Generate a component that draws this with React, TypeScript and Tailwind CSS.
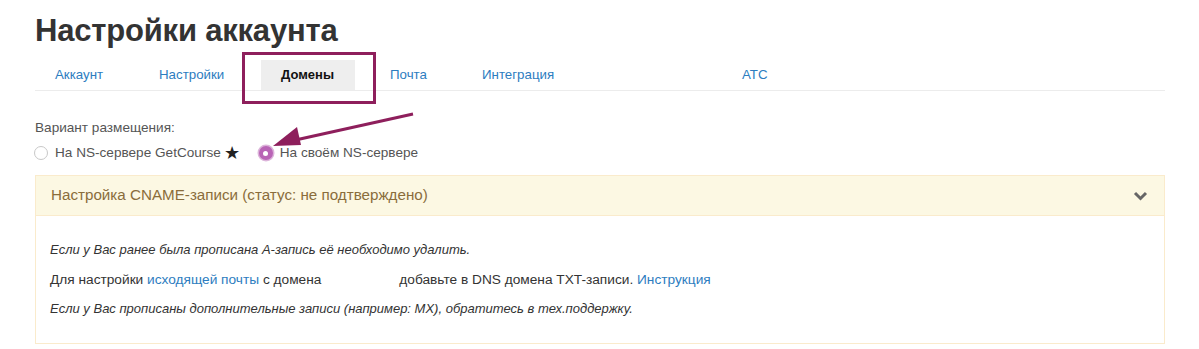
import React from "react";

const tabs = [
  { label: "Аккаунт", w: "w-[104px]" },
  { label: "Настройки", w: "w-[122px]" },
  { label: "Домены", w: "w-[109px]", active: true },
  { label: "Почта", w: "w-[92px]" },
  { label: "Интеграция", w: "w-[260px]" },
  { label: "АТС", w: "w-[110px]" },
];

const Radio = ({ checked, children }: { checked?: boolean; children: React.ReactNode }) => (
  <label className="flex items-center gap-[7px]">
    {checked ? (
      <span className="flex h-[14px] w-[14px] items-center justify-center rounded-full bg-[#b964b6] ring-[1.5px] ring-[#dcb4da]">
        <span className="h-[5px] w-[5px] rounded-full bg-white" />
      </span>
    ) : (
      <span className="h-[14px] w-[14px] rounded-full border border-[#c8c8c8] bg-white" />
    )}
    <span className="flex items-center">{children}</span>
  </label>
);

export default function App() {
  return (
    <div className="relative min-h-[349px] w-[1199px] bg-white pl-[35px] pr-[34px] text-[#333] [font-family:'Liberation_Sans',Arial,sans-serif]">
      <h1 className="pt-[12px] text-[31px] font-bold leading-[38px] tracking-[-0.2px] text-[#333]">
        Настройки аккаунта
      </h1>

      {/* вкладки */}
      <ul className="mt-[10px] flex border-b border-[#ececec]">
        {tabs.map((t) => (
          <li key={t.label} className={t.w}>
            {t.active ? (
              <span className="inline-block h-[30px] w-[94px] bg-[#eeeeee] pl-[20px] text-[13px] font-bold leading-[30px] text-[#111]">
                {t.label}
              </span>
            ) : (
              <a className="inline-block h-[30px] pl-[20px] text-[13.3px] leading-[30px] text-[#2d7dbf]">
                {t.label}
              </a>
            )}
          </li>
        ))}
      </ul>

      <div className="mt-[28px] text-[13.6px] leading-[18px] text-[#555]">Вариант размещения:</div>
      <div className="ml-[-1px] mt-[7px] flex items-center text-[13.6px] leading-[18px] text-[#555]">
        <Radio>
          На NS-сервере GetCourse
          <span className="ml-[3px] text-[18px] leading-[18px] text-[#222]">★</span>
        </Radio>
        <div className="ml-[19px]">
          <Radio checked>На своём NS-сервере</Radio>
        </div>
      </div>

      {/* панель CNAME */}
      <div className="mt-[13px] border border-[#faebcc]">
        <div className="flex h-[39px] items-center justify-between bg-[#fcf8e3] pl-[15px] pr-[16px] text-[15.2px] text-[#8a6d3b]">
          <span>Настройка CNAME-записи (статус: не подтверждено)</span>
          <svg width="15" height="10" viewBox="0 0 15 10" fill="none">
            <polyline points="2,2 7.5,7.5 13,2" stroke="#666" strokeWidth="3" strokeLinejoin="miter" />
          </svg>
        </div>
        <div className="border-t border-[#faebcc] px-[14px] pb-[25px] pt-[25px] text-[13px] leading-[18px] text-[#333]">
          <p className="italic">Если у Вас ранее была прописана А-запись её необходимо удалить.</p>
          <p className="mt-[12px] text-[13.7px]">
            Для настройки <a className="text-[#2d7dbf]">исходящей почты</a> с домена
            <span className="inline-block w-[78px]" />
            добавьте в DNS домена TXT-записи. <a className="text-[#2d7dbf]">Инструкция</a>
          </p>
          <p className="mt-[11px] italic">
            Если у Вас прописаны дополнительные записи (например: MX), обратитесь в тех.поддержку.
          </p>
        </div>
      </div>

      {/* пометка: рамка и стрелка */}
      <div className="absolute left-[242px] top-[52px] h-[52px] w-[134px] border-[3px] border-[#8e1f5c]" />
      <svg className="absolute left-[255px] top-[105px]" width="165" height="50" viewBox="0 0 165 50">
        <line x1="158" y1="9" x2="36" y2="36" stroke="#8e1f5c" strokeWidth="3" />
        <polygon points="18,41 42,22 46,40" fill="#8e1f5c" />
      </svg>
    </div>
  );
}
